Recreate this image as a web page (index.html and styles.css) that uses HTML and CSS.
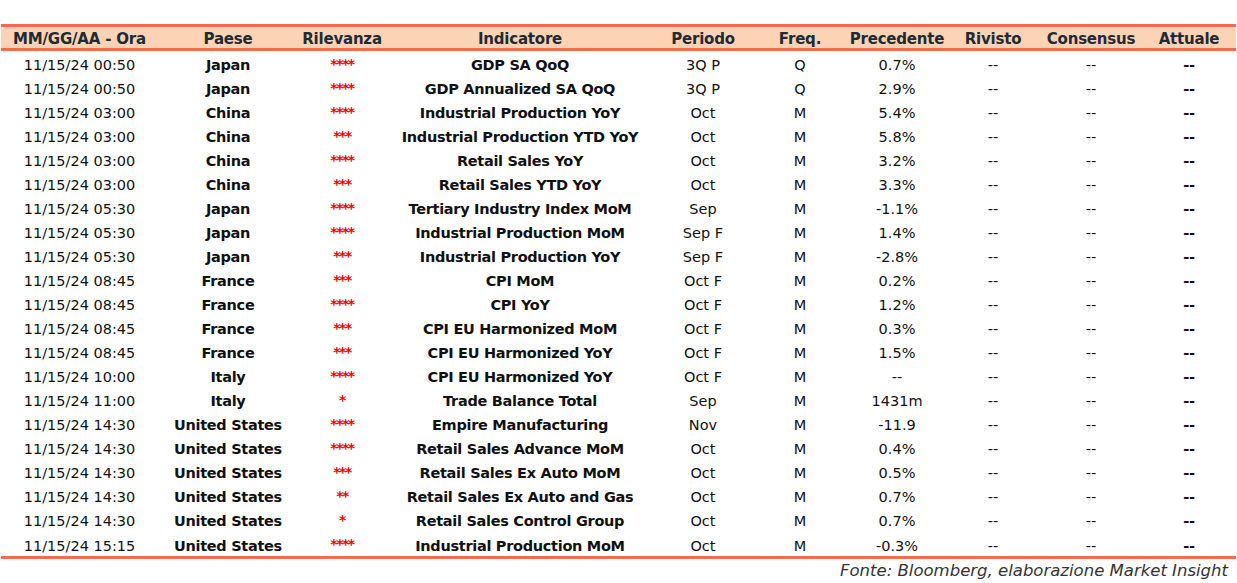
FILE: index.html
```html
<!DOCTYPE html>
<html>
<head>
<meta charset="utf-8">
<link rel="stylesheet" href="styles.css">
</head>
<body>
<div class="wrap">
<table class="cal">
<thead>
<tr>
<th class="c-date">MM/GG/AA - Ora</th>
<th class="c-paese">Paese</th>
<th class="c-ril">Rilevanza</th>
<th class="c-ind">Indicatore</th>
<th class="c-per">Periodo</th>
<th class="c-freq">Freq.</th>
<th class="c-prec">Precedente</th>
<th class="c-riv">Rivisto</th>
<th class="c-cons">Consensus</th>
<th class="c-att">Attuale</th>
</tr>
</thead>
<tbody>
<tr><td>11/15/24 00:50</td><td class="b">Japan</td><td class="stars">****</td><td class="b">GDP SA QoQ</td><td>3Q P</td><td>Q</td><td>0.7%</td><td>--</td><td>--</td><td class="b">--</td></tr>
<tr><td>11/15/24 00:50</td><td class="b">Japan</td><td class="stars">****</td><td class="b">GDP Annualized SA QoQ</td><td>3Q P</td><td>Q</td><td>2.9%</td><td>--</td><td>--</td><td class="b">--</td></tr>
<tr><td>11/15/24 03:00</td><td class="b">China</td><td class="stars">****</td><td class="b">Industrial Production YoY</td><td>Oct</td><td>M</td><td>5.4%</td><td>--</td><td>--</td><td class="b">--</td></tr>
<tr><td>11/15/24 03:00</td><td class="b">China</td><td class="stars">***</td><td class="b">Industrial Production YTD YoY</td><td>Oct</td><td>M</td><td>5.8%</td><td>--</td><td>--</td><td class="b">--</td></tr>
<tr><td>11/15/24 03:00</td><td class="b">China</td><td class="stars">****</td><td class="b">Retail Sales YoY</td><td>Oct</td><td>M</td><td>3.2%</td><td>--</td><td>--</td><td class="b">--</td></tr>
<tr><td>11/15/24 03:00</td><td class="b">China</td><td class="stars">***</td><td class="b">Retail Sales YTD YoY</td><td>Oct</td><td>M</td><td>3.3%</td><td>--</td><td>--</td><td class="b">--</td></tr>
<tr><td>11/15/24 05:30</td><td class="b">Japan</td><td class="stars">****</td><td class="b">Tertiary Industry Index MoM</td><td>Sep</td><td>M</td><td>-1.1%</td><td>--</td><td>--</td><td class="b">--</td></tr>
<tr><td>11/15/24 05:30</td><td class="b">Japan</td><td class="stars">****</td><td class="b">Industrial Production MoM</td><td>Sep F</td><td>M</td><td>1.4%</td><td>--</td><td>--</td><td class="b">--</td></tr>
<tr><td>11/15/24 05:30</td><td class="b">Japan</td><td class="stars">***</td><td class="b">Industrial Production YoY</td><td>Sep F</td><td>M</td><td>-2.8%</td><td>--</td><td>--</td><td class="b">--</td></tr>
<tr><td>11/15/24 08:45</td><td class="b">France</td><td class="stars">***</td><td class="b">CPI MoM</td><td>Oct F</td><td>M</td><td>0.2%</td><td>--</td><td>--</td><td class="b">--</td></tr>
<tr><td>11/15/24 08:45</td><td class="b">France</td><td class="stars">****</td><td class="b">CPI YoY</td><td>Oct F</td><td>M</td><td>1.2%</td><td>--</td><td>--</td><td class="b">--</td></tr>
<tr><td>11/15/24 08:45</td><td class="b">France</td><td class="stars">***</td><td class="b">CPI EU Harmonized MoM</td><td>Oct F</td><td>M</td><td>0.3%</td><td>--</td><td>--</td><td class="b">--</td></tr>
<tr><td>11/15/24 08:45</td><td class="b">France</td><td class="stars">***</td><td class="b">CPI EU Harmonized YoY</td><td>Oct F</td><td>M</td><td>1.5%</td><td>--</td><td>--</td><td class="b">--</td></tr>
<tr><td>11/15/24 10:00</td><td class="b">Italy</td><td class="stars">****</td><td class="b">CPI EU Harmonized YoY</td><td>Oct F</td><td>M</td><td>--</td><td>--</td><td>--</td><td class="b">--</td></tr>
<tr><td>11/15/24 11:00</td><td class="b">Italy</td><td class="stars">*</td><td class="b">Trade Balance Total</td><td>Sep</td><td>M</td><td>1431m</td><td>--</td><td>--</td><td class="b">--</td></tr>
<tr><td>11/15/24 14:30</td><td class="b">United States</td><td class="stars">****</td><td class="b">Empire Manufacturing</td><td>Nov</td><td>M</td><td>-11.9</td><td>--</td><td>--</td><td class="b">--</td></tr>
<tr><td>11/15/24 14:30</td><td class="b">United States</td><td class="stars">****</td><td class="b">Retail Sales Advance MoM</td><td>Oct</td><td>M</td><td>0.4%</td><td>--</td><td>--</td><td class="b">--</td></tr>
<tr><td>11/15/24 14:30</td><td class="b">United States</td><td class="stars">***</td><td class="b">Retail Sales Ex Auto MoM</td><td>Oct</td><td>M</td><td>0.5%</td><td>--</td><td>--</td><td class="b">--</td></tr>
<tr><td>11/15/24 14:30</td><td class="b">United States</td><td class="stars">**</td><td class="b">Retail Sales Ex Auto and Gas</td><td>Oct</td><td>M</td><td>0.7%</td><td>--</td><td>--</td><td class="b">--</td></tr>
<tr><td>11/15/24 14:30</td><td class="b">United States</td><td class="stars">*</td><td class="b">Retail Sales Control Group</td><td>Oct</td><td>M</td><td>0.7%</td><td>--</td><td>--</td><td class="b">--</td></tr>
<tr class="last"><td>11/15/24 15:15</td><td class="b">United States</td><td class="stars">****</td><td class="b">Industrial Production MoM</td><td>Oct</td><td>M</td><td>-0.3%</td><td>--</td><td>--</td><td class="b">--</td></tr>
</tbody>
</table>
<div class="source">Fonte: Bloomberg, elaborazione Market Insight</div>
</div>
</body>
</html>
```

FILE: styles.css
```css
html, body { margin: 0; padding: 0; background: #ffffff; }
body {
  font-family: "DejaVu Sans", "Liberation Sans", sans-serif;
  color: #111111;
}
.wrap {
  padding: 24px 1px 0 1px;
}
.cal {
  width: 1235px;
  border-collapse: separate;
  border-spacing: 0;
  table-layout: fixed;
}
.cal th {
  box-sizing: content-box;
  height: 17px;
  padding: 4px 0 0 0;
  background: #fcd3b4;
  border-top: 3px solid #f46b52;
  border-bottom: 3px solid #f46b52;
  font-size: 15px;
  line-height: 17px;
  font-weight: bold;
  color: #1c2b36;
  text-align: center;
  white-space: nowrap;
  letter-spacing: -0.2px;
}
.cal td {
  box-sizing: content-box;
  height: 20px;
  padding: 4px 0 0 0;
  font-size: 14.5px;
  line-height: 20px;
  text-align: center;
  white-space: nowrap;
  color: #111111;
  vertical-align: middle;
}
.cal tr.last td {
  height: 21px;
  border-bottom: 3px solid #f46b52;
}
.cal td.b { font-weight: bold; letter-spacing: -0.3px; }
.cal td.stars {
  color: #ff0000;
  font-weight: bold;
  font-size: 14px;
  line-height: 14px;
  vertical-align: top;
  padding-top: 6px;
  height: 18px;
  letter-spacing: -1.5px;
}
.cal tr.last td.stars { height: 19px; }
.c-date { width: 157px; }
.c-paese { width: 140px; }
.c-ril { width: 88px; }
.c-ind { width: 268px; }
.c-per { width: 98px; }
.c-freq { width: 96px; }
.c-prec { width: 98px; }
.c-riv { width: 94px; }
.c-cons { width: 102px; }
.c-att { width: 94px; }
.source {
  text-align: right;
  font-style: italic;
  font-size: 16.5px;
  line-height: 20px;
  color: #333333;
  padding: 2px 8px 0 0;
}
```
